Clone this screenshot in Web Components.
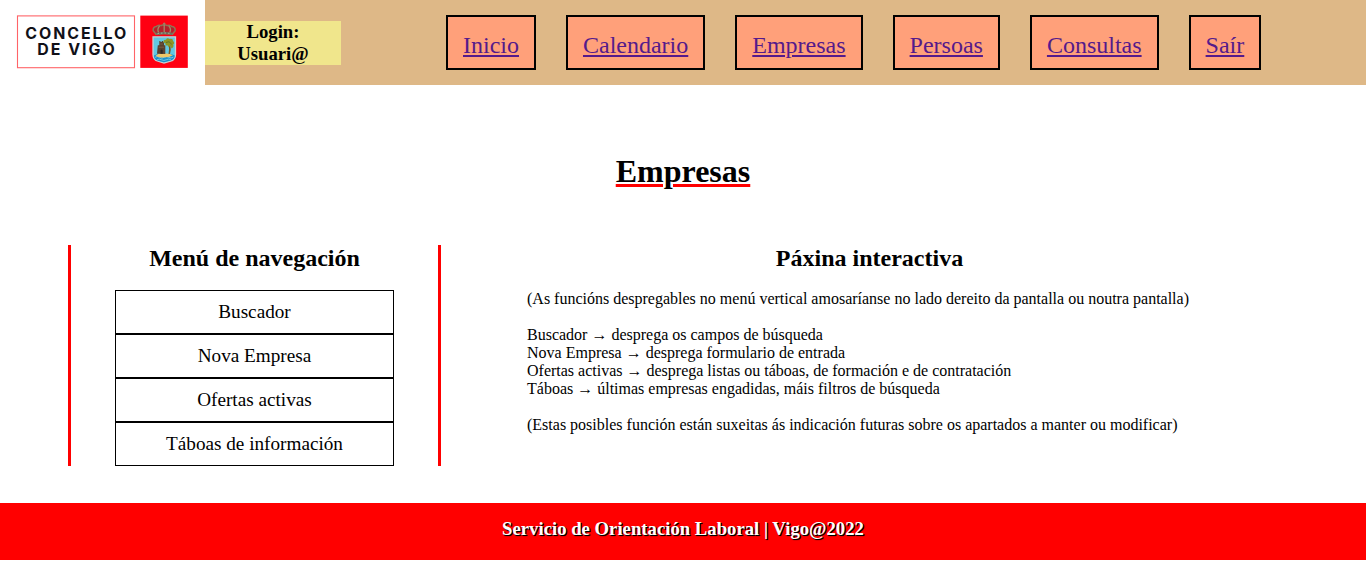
<!DOCTYPE html>
<html lang="gl">
<head>
<meta charset="utf-8">
<title>Empresas</title>
<style>
body { margin: 0; background: #fff; color: #000; font-family: "Liberation Serif", "Times New Roman", serif; font-size: 16px; }
</style>
</head>
<body>
<app-page></app-page>
<script>
function define(name, html) {
  const template = document.createElement('template');
  template.innerHTML = html;
  customElements.define(name, class extends HTMLElement {
    constructor() {
      super();
      this.attachShadow({ mode: 'open' }).append(template.content.cloneNode(true));
    }
  });
}

define('city-logo', `
<style>
  :host { display: block; width: 205px; height: 85px; background: #fff; }
  svg { display: block; }
  text { font-family: Inter, "Liberation Sans", sans-serif; font-weight: 700; font-size: 15.9px; fill: #111118; }
</style>
<svg width="205" height="85" viewBox="0 0 205 85" role="img" aria-label="Concello de Vigo">
  <rect x="17.5" y="15.9" width="117" height="51.8" fill="#fff" stroke="#ff6468" stroke-width="1.1"/>
  <text x="25.3" y="38.9" textLength="101" lengthAdjust="spacing">CONCELLO</text>
  <text x="37.3" y="55.4" textLength="77.5" lengthAdjust="spacing">DE VIGO</text>
  <rect x="140.3" y="15.6" width="47.5" height="52.3" fill="#ff0012"/>
  <path d="M153 36.800V54.500Q153 60 158 61.200L164 63L170.500 61.200Q175.500 60 175.500 54.500V36.800Z" fill="#62c7e2" stroke="#c9ced1" stroke-width="1.300"/>
  <path d="M154 55.500Q159 53 164 55Q169 53 174.800 55.500Q174.300 60 170 60.700L164 62.200L158 60.700Q154.300 60 154 55.500Z" fill="#1b8fca"/>
  <path d="M155 57.300q2.300-1.500 4.600 0t4.600 0t4.600 0t4.600-.2M157 59.800q2.300-1.300 4.600 0t4.600 0t4.600-.2" fill="none" stroke="#9bddeb" stroke-width=".7"/>
  <path d="M155.500 55.700Q159 53 163 53.700Q169 52.600 173 55.300Q169 57.800 164 57.200Q159 58 155.500 55.700Z" fill="#eec667"/>
  <path d="M157 53.800L157.800 45.300H159.300V41H160.500V42H161.800V41H163V42.200H164V45.300H165.300V54Z" fill="#59402f"/>
  <path d="M160.500 53.800V50.300Q161.500 48.500 162.700 50.300V53.800Z" fill="#2d2926"/>
  <path d="M158.600 47.200h5.500M160.300 44h2.500" stroke="#8a684b" stroke-width=".7"/>
  <path d="M168.500 54Q169.800 49 168.500 44.500L170.300 44.300Q171.300 50 170 54Z" fill="#765623"/>
  <path d="M163.500 42.500Q163 39.500 166 39.800Q167 37.300 169.500 39Q173 38.200 173.100 41Q175.300 43 173.200 44.600Q174.200 47.500 171.500 48.500L170.500 46Q168 47.800 167.500 45.300Q165 46.300 165.500 43.500Z" fill="#8e9525"/>
  <path d="M166 42.500l3-.8 2.700 2.500" fill="none" stroke="#5e7424"/>
  <path d="M156 34.300L153.200 30.700Q152.800 27 156.300 26.600Q158.400 24.400 161 25.700Q164 23.800 167.200 25.700Q169.800 24.400 172 26.600Q175.500 27 175.200 30.700L172.400 34.300Q164 32.600 156 34.300Z" fill="#b3212b" stroke="#8f7455" stroke-width="1.500"/>
  <path d="M158.700 32.800Q156.700 28.700 159.700 26M164.200 32.300V25M169.700 32.800Q171.700 28.700 168.700 26" fill="none" stroke="#a68a69" stroke-width="1.300"/>
  <path d="M164.200 22.500v3.200M163 23.700h2.400" stroke="#9f8567"/>
  <path d="M156.300 33.800Q164.200 32.300 172.200 33.800" fill="none" stroke="#6d6f5e" stroke-width="2.200"/>
  <path d="M157.500 33.700Q164.200 32.300 171 33.700" fill="none" stroke="#bcc0a6" stroke-width=".8" stroke-dasharray="1.500 2"/>
</svg>`);

define('login-badge', `
<style>
  :host { display: block; width: 136px; background: khaki; font-size: 18.72px; font-weight: bold; line-height: 22px; text-align: center; }
</style>
<div>Login:</div><div><slot></slot></div>`);

define('nav-button', `
<style>
  :host { display: block; box-sizing: border-box; height: 55px; border: 2px solid #000; padding: 15px 15px 0; background: lightsalmon; font-size: 24px; line-height: 27px; white-space: nowrap; }
  a { color: #551a8b; text-decoration: underline; }
</style>
<a href="#"><slot></slot></a>`);

define('top-bar', `
<style>
  :host { display: flex; align-items: center; height: 85px; background: burlywood; }
  nav { display: flex; gap: 30px; margin-left: 105px; }
</style>
<city-logo></city-logo>
<login-badge>Usuari@</login-badge>
<nav>
  <nav-button>Inicio</nav-button><nav-button>Calendario</nav-button><nav-button>Empresas</nav-button>
  <nav-button>Persoas</nav-button><nav-button>Consultas</nav-button><nav-button>Saír</nav-button>
</nav>`);

define('menu-item', `
<style>
  :host { display: block; border: 1px solid #000; padding: 10px 0; font-size: 19.2px; line-height: 22px; text-align: center; }
</style>
<slot></slot>`);

define('side-menu', `
<style>
  :host { display: block; box-sizing: border-box; width: 373px; height: 221px; padding: 0 44px; border: solid red; border-width: 0 3px; }
  h2 { margin: 0 0 18px; font-size: 24px; line-height: 27px; text-align: center; }
</style>
<h2>Menú de navegación</h2>
<menu-item>Buscador</menu-item>
<menu-item>Nova Empresa</menu-item>
<menu-item>Ofertas activas</menu-item>
<menu-item>Táboas de información</menu-item>`);

define('info-panel', `
<style>
  :host { display: block; width: 685px; }
  h2 { margin: 0 0 18px; font-size: 24px; line-height: 27px; text-align: center; }
  p { margin: 0 0 18px; line-height: 18px; white-space: nowrap; }
</style>
<h2>Páxina interactiva</h2>
<p>(As funcións despregables no menú vertical amosaríanse no lado dereito da pantalla ou noutra pantalla)</p>
<p>Buscador → desprega os campos de búsqueda<br>Nova Empresa → desprega formulario de entrada<br>Ofertas activas → desprega listas ou táboas, de formación e de contratación<br>Táboas → últimas empresas engadidas, máis filtros de búsqueda</p>
<p>(Estas posibles función están suxeitas ás indicación futuras sobre os apartados a manter ou modificar)</p>`);

define('page-footer', `
<style>
  :host { display: block; box-sizing: border-box; height: 57px; padding-top: 15px; background: red; color: #fff; font-size: 18.72px; font-weight: bold; line-height: 21px; text-align: center; text-shadow: 1px 1px 1px #000, 1px 1px 0 #000; }
</style>
<slot></slot>`);

define('app-page', `
<style>
  :host { display: block; }
  h1 { margin: 68px 0 55px; font-size: 32px; line-height: 37px; text-align: center; text-decoration: underline red 3px; }
  main { display: flex; gap: 86px; padding-left: 68px; margin-bottom: 37px; }
</style>
<top-bar></top-bar>
<h1>Empresas</h1>
<main><side-menu></side-menu><info-panel></info-panel></main>
<page-footer>Servicio de Orientación Laboral | Vigo@2022</page-footer>`);
</script>
</body>
</html>
